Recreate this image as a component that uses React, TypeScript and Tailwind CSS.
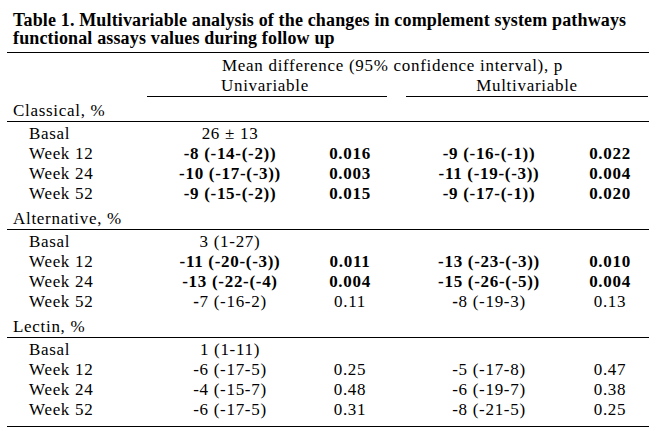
const serif = { fontFamily: '"Liberation Serif", "Times New Roman", serif' };

type Row = {
  label: string;
  uni: string;
  uniP?: string;
  multi?: string;
  multiP?: string;
  bold?: boolean;
  lead?: boolean;
};

const groups: { name: string; rows: Row[] }[] = [
  {
    name: "Classical, %",
    rows: [
      { label: "Basal", uni: "26 ± 13" },
      { label: "Week 12", uni: "-8 (-14-(-2))", uniP: "0.016", multi: "-9 (-16-(-1))", multiP: "0.022", bold: true },
      { label: "Week 24", uni: "-10 (-17-(-3))", uniP: "0.003", multi: "-11 (-19-(-3))", multiP: "0.004", bold: true },
      { label: "Week 52", uni: "-9 (-15-(-2))", uniP: "0.015", multi: "-9 (-17-(-1))", multiP: "0.020", bold: true },
    ],
  },
  {
    name: "Alternative, %",
    rows: [
      { label: "Basal", uni: "3 (1-27)" },
      { label: "Week 12", uni: "-11 (-20-(-3))", uniP: "0.011", multi: "-13 (-23-(-3))", multiP: "0.010", bold: true },
      { label: "Week 24", uni: "-13 (-22-(-4)", uniP: "0.004", multi: "-15 (-26-(-5))", multiP: "0.004", bold: true },
      { label: "Week 52", uni: "-7 (-16-2)", uniP: "0.11", multi: "-8 (-19-3)", multiP: "0.13", lead: true },
    ],
  },
  {
    name: "Lectin, %",
    rows: [
      { label: "Basal", uni: "1 (1-11)" },
      { label: "Week 12", uni: "-6 (-17-5)", uniP: "0.25", multi: "-5 (-17-8)", multiP: "0.47" },
      { label: "Week 24", uni: "-4 (-15-7)", uniP: "0.48", multi: "-6 (-19-7)", multiP: "0.38" },
      { label: "Week 52", uni: "-6 (-17-5)", uniP: "0.31", multi: "-8 (-21-5)", multiP: "0.25" },
    ],
  },
];

const grid = "grid grid-cols-[140px_166px_74px_19px_166px_76px]";

function Value({ text, lead }: { text?: string; lead?: boolean }) {
  if (!text) return null;
  // only the minus sign is bold on the non-significant week 52 row
  if (lead && text.startsWith("-")) {
    return (
      <>
        <span className="font-bold">-</span>
        {text.slice(1)}
      </>
    );
  }
  return <>{text}</>;
}

export default function App() {
  return (
    <div className="w-[662px] h-[431px] bg-white text-black overflow-hidden" style={serif}>
      <div className="pt-[11px] pl-[13px] text-[18px] leading-[18px] tracking-[0.15px] font-bold">
        Table 1. Multivariable analysis of the changes in complement system pathways
        <br />
        functional assays values during follow up
      </div>

      <div className="ml-[7px] mt-[5px] w-[642px] text-[17px] leading-[20px] tracking-[0.7px]">
        <div className="border-t border-black pt-[3px]">
          <div className={grid}>
            <div />
            <div className="col-span-5 text-center pr-[10px]">
              Mean difference (95% confidence interval), p
            </div>
          </div>
          <div className={grid}>
            <div />
            <div className="col-span-2 border-b border-black text-center pr-[4px]">Univariable</div>
            <div />
            <div className="col-span-2 border-b border-black text-center">Multivariable</div>
          </div>
        </div>

        {groups.map((g, gi) => (
          <div key={g.name}>
            <div className={`pl-[6px] border-b border-black ${gi === 0 ? "pt-[4px]" : "pt-[5px]"}`}>
              {g.name}
            </div>
            <div className={`pt-[2px] ${gi === groups.length - 1 ? "border-b border-black pb-[6px]" : ""}`}>
              {g.rows.map((r) => (
                <div key={r.label} className={`${grid} h-[20px] ${r.bold ? "font-bold" : ""}`}>
                  <div className="pl-[22px] font-normal">{r.label}</div>
                  <div className="text-center">
                    <Value text={r.uni} lead={r.lead} />
                  </div>
                  <div className="text-center">{r.uniP}</div>
                  <div />
                  <div className="text-center">
                    <Value text={r.multi} lead={r.lead} />
                  </div>
                  <div className="text-center">{r.multiP}</div>
                </div>
              ))}
            </div>
          </div>
        ))}
      </div>
    </div>
  );
}
